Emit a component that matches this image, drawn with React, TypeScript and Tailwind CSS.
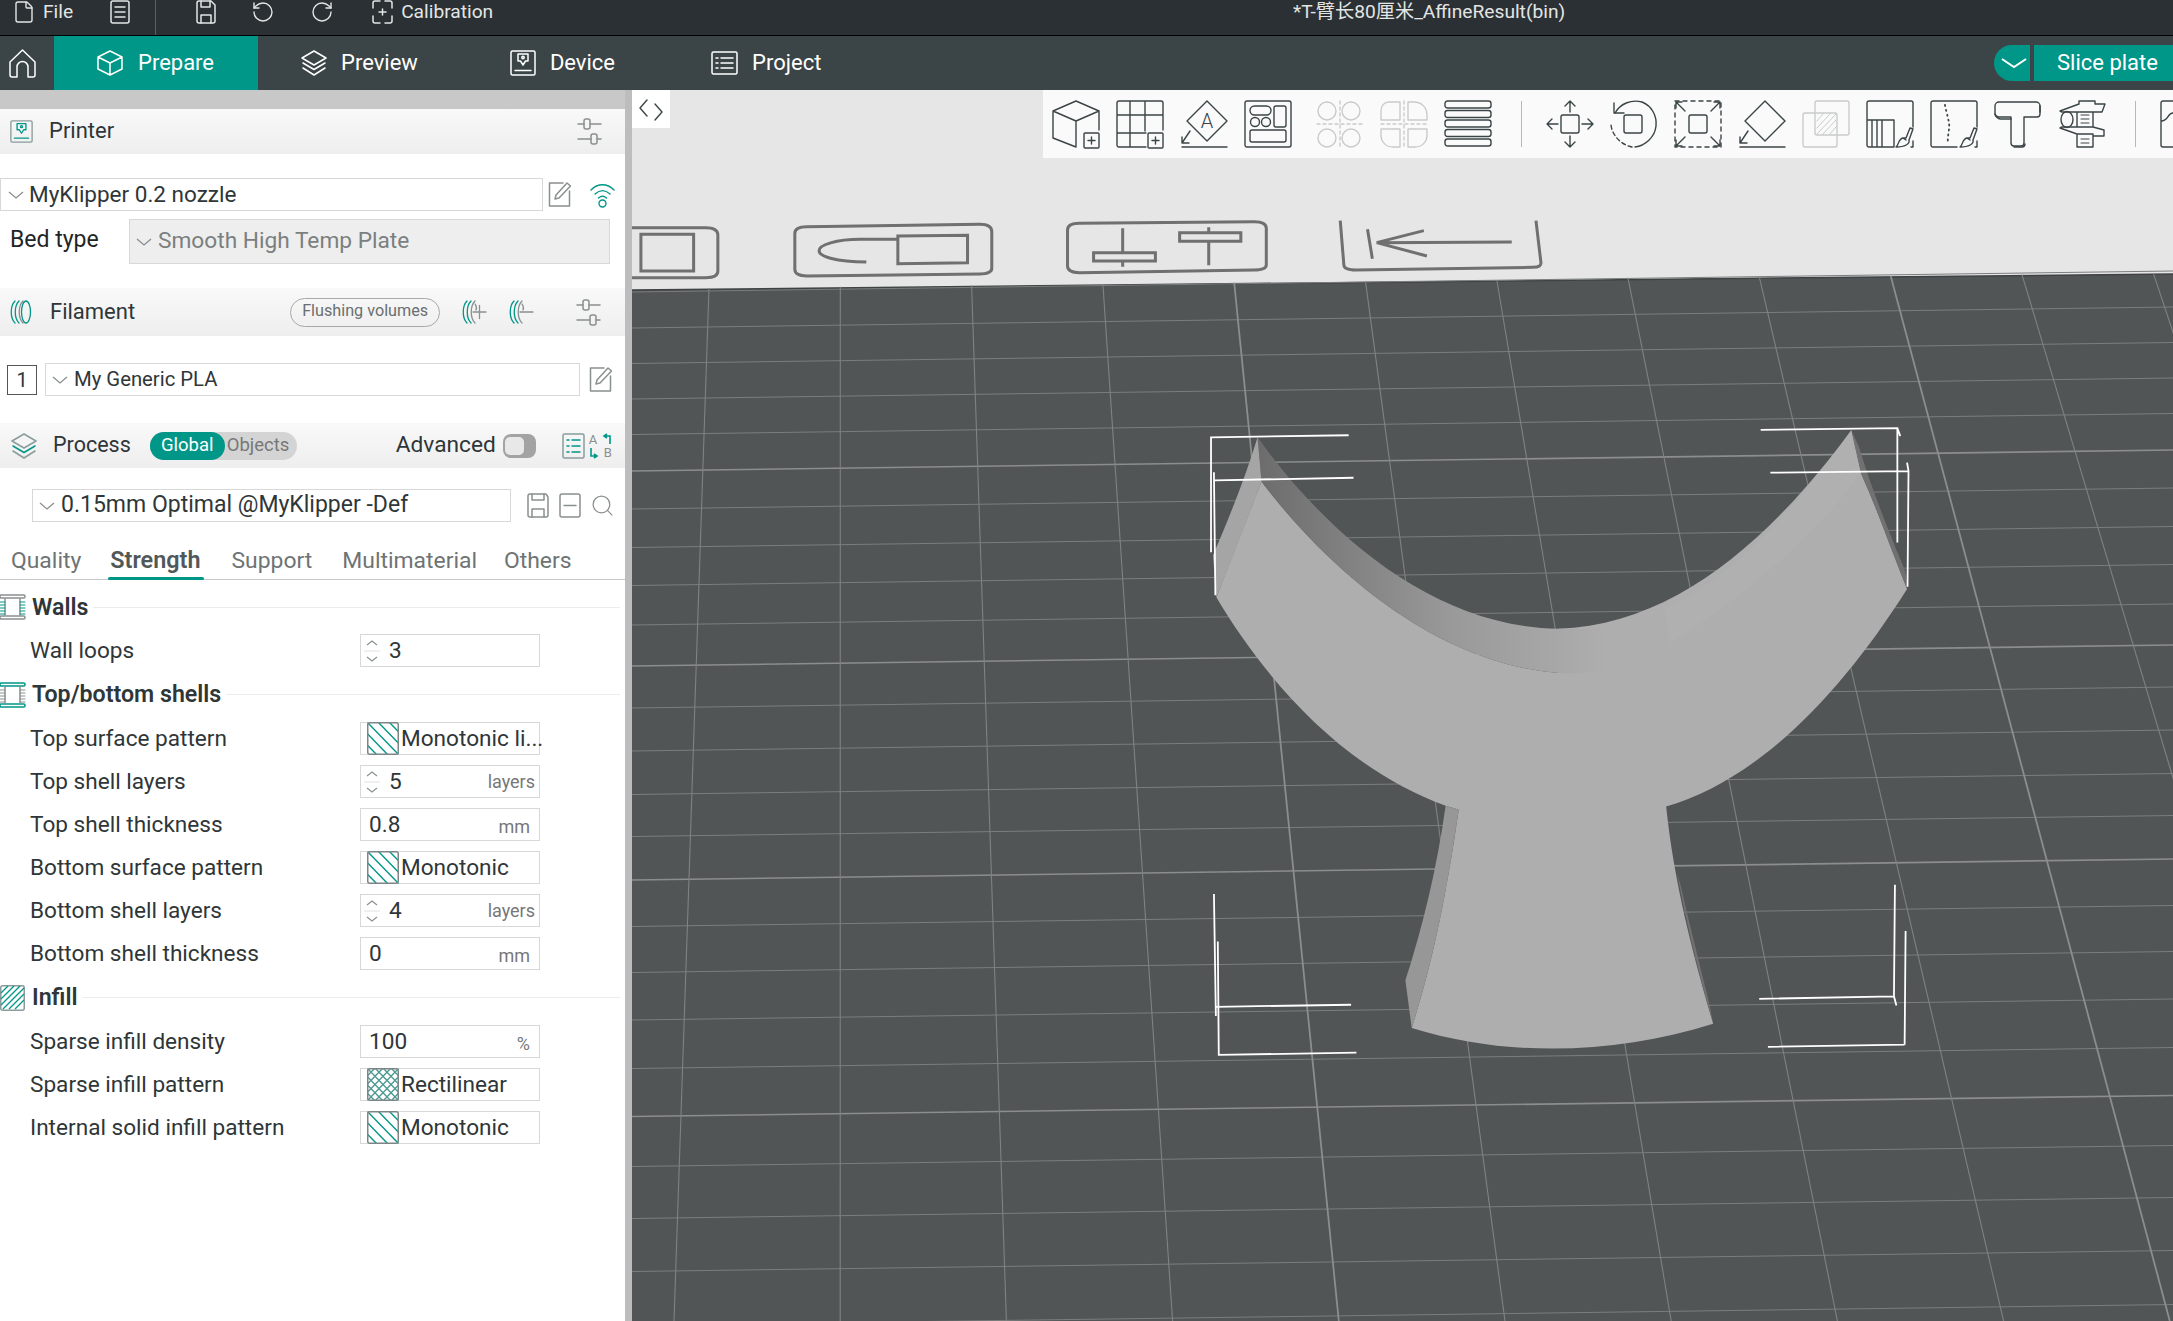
import { File, RotateCcw, RotateCw, Search } from "lucide-react";
import type { ReactNode } from "react";

const TEAL = "#009688";
const INK = "#3b4446";

function Glyph({ w, h, box, children, color = INK, sw = 1.5 }: { w: number; h: number; box?: string; children: ReactNode; color?: string; sw?: number }) {
  return (
    <svg width={w} height={h} viewBox={box ?? `0 0 ${w} ${h}`} fill="none" stroke={color} strokeWidth={sw} className="shrink-0 overflow-visible" strokeLinecap="round" strokeLinejoin="round">
      {children}
    </svg>
  );
}

// small glyphs used across the side panel and the top bars
const Chevron = ({ color = "#8a8f90" }: { color?: string }) => (
  <svg width="16" height="8" viewBox="0 0 16 8" fill="none" stroke={color} strokeWidth="1.3" className="shrink-0"><path d="M1 1l7 6 7-6" /></svg>
);
const Sliders = () => (
  <Glyph w={23} h={27} color="#8a8f90">
    <path d="M0 6h6M12 6h11M0 21h13M19 21h4" />
    <rect x="6" y="1" width="6" height="10" rx="2" />
    <rect x="13" y="16" width="6" height="10" rx="2" />
  </Glyph>
);
const Edit = () => (
  <Glyph w={23} h={25} color="#8a8f90">
    <path d="M15 1H1.5v23h20V9" />
    <path d="M7 17l1-4L19 1l3.5 3L11 16z" />
  </Glyph>
);
const PrinterIcon = ({ color = "#fff", accent = "#fff", s = 26 }: { color?: string; accent?: string; s?: number }) => (
  <Glyph w={s} h={s} box="0 0 26 26" color={color}>
    <rect x="1" y="1" width="24" height="24" rx="1.5" />
    <path d="M8 4h10v7h-2.5L13 15l-2.5-4H8z" stroke={accent} />
    <circle cx="13" cy="7.5" r="1.2" stroke={accent} />
    <path d="M5 20.5h16" stroke={accent} />
  </Glyph>
);
const LayersIcon = ({ color = "#fff", accent }: { color?: string; accent?: string }) => (
  <Glyph w={26} h={26} color={color}>
    <path d="M13 1l12 7-12 7L1 8z" />
    <path d="M2 13l11 6.5L24 13" stroke={accent ?? color} />
    <path d="M2 18l11 7 11-7" />
  </Glyph>
);
const FilamentIcon = ({ extra }: { extra?: ReactNode }) => (
  <Glyph w={24} h={24} color={TEAL} sw={1.3}>
    <path d="M5 1C0 6 0 18 5 23M9 1C4 6 4 18 9 23" />
    <path d="M13 1C8 6 8 18 13 23" stroke="#8a8f90" />
    {extra ?? <ellipse cx="16" cy="12" rx="4.500" ry="11" stroke={TEAL} />}
  </Glyph>
);

// shading patterns in the combo boxes
function Hatch({ kind }: { kind: "mono" | "rect" }) {
  const down = kind === "mono"
    ? [-22, -11, 0, 11, 22].map((d) => `M${d} 0L${d + 32} 33`)
    : [-24, -16, -8, 0, 8, 16, 24].map((d) => `M${d} 0L${d + 32} 33`);
  const up = [8, 16, 24, 32, 40, 48, 56].map((d) => `M${d} 0L${d - 32} 33`);
  return (
    <svg width="32" height="33" viewBox="0 0 32 33" className="shrink-0">
      <defs>
        <clipPath id={`hatch-${kind}`}><rect x="0" y="0" width="32" height="33" rx="2" /></clipPath>
      </defs>
      <g clipPath={`url(#hatch-${kind})`} fill="none" strokeWidth="1.4" stroke={kind === "mono" ? TEAL : "#4f9a92"}>
        <path d={down.join("")} />
        {kind === "rect" && <path d={up.join("")} />}
      </g>
      <rect x="0.75" y="0.75" width="30.5" height="31.5" rx="2" fill="none" stroke="#7d8687" strokeWidth="1.5" />
    </svg>
  );
}

function WallsIcon({ filled }: { filled?: boolean }) {
  return (
    <Glyph w={25} h={26} color={filled ? "#8a8f90" : TEAL}>
      <rect x="0" y="1" width="25" height="3" rx="1.2" />
      <rect x="0" y="22" width="25" height="3" rx="1.2" />
      <path d="M5 5v16M20 5v16" stroke="#8a8f90" />
      <path d="M0 8h5M0 11h5M0 14h5M0 17h5M0 20h5M20 8h5M20 11h5M20 14h5M20 17h5M20 20h5" stroke={filled ? TEAL : "#8a8f90"} strokeWidth="1" />
    </Glyph>
  );
}

function InfillIcon() {
  return (
    <svg width="25" height="26" viewBox="0 0 25 26" className="shrink-0" fill="none">
      <rect x="0.75" y="0.75" width="23.5" height="24.5" rx="2" stroke="#8a9c9c" strokeWidth="1.5" />
      <path d="M1 8L8 1M1 14L14 1M1 20L20 1M3 24L24 3M9 24L24 9M15 24L24 15" stroke={TEAL} strokeWidth="1.3" />
    </svg>
  );
}

function Row({ label, children }: { label: string; children: ReactNode }) {
  return (
    <div className="mb-[10px] flex h-[33px] items-center pl-[30px]">
      <div className="w-[330px] whitespace-nowrap text-[22.6px] text-[#2f3638]">{label}</div>
      <div className="flex h-[33px] w-[180px] items-center border border-[#d8d8d8] bg-white">{children}</div>
    </div>
  );
}

function NumberField({ value, unit, spin }: { value: string; unit?: string; spin?: boolean }) {
  return (
    <>
      {spin ? (
        <svg width="18" height="26" viewBox="0 0 18 26" fill="none" stroke="#8a8f90" strokeWidth="1.2" className="ml-[2px] mr-[8px] shrink-0">
          <path d="M4 7l5-4 5 4M4 19l5 4 5-4" />
          <path d="M1 13h16" stroke="#e6e6e6" />
        </svg>
      ) : (
        <span className="w-[8px]" />
      )}
      <span className="text-[22.6px] text-[#2f3638]">{value}</span>
      {unit && <span className={`ml-auto text-[18px] text-[#777] ${unit === "layers" ? "mr-[4px]" : "mr-[9px] mt-[3px]"}`}>{unit}</span>}
    </>
  );
}

function PatternField({ kind = "mono", text }: { kind?: "mono" | "rect"; text: string }) {
  return (
    <>
      <span className="ml-[6px] mr-[2px] flex"><Hatch kind={kind} /></span>
      <span className="whitespace-nowrap text-[22.6px] text-[#2f3638]">{text}</span>
    </>
  );
}

function Section({ title, icon, className = "h-[55px]" }: { title: string; icon: ReactNode; className?: string }) {
  return (
    <div className={`flex items-center pr-[5px] ${className}`}>
      {icon}
      <span className="ml-[7px] whitespace-nowrap text-[23.2px] font-semibold text-[#2f3638]">{title}</span>
      <span className="ml-[5px] h-px flex-1 bg-[#ececec]" />
    </div>
  );
}

function PanelHeader({ className, children }: { className: string; children: ReactNode }) {
  return <div className={`flex items-center bg-gradient-to-b from-[#f9f9f9] to-[#eeeeee] ${className}`}>{children}</div>;
}

function SidePanel() {
  return (
    <div className="flex w-[625px] shrink-0 flex-col bg-white text-[#2f3638]">
      <div className="h-[19px] bg-[#c8c8c8]" />
      <PanelHeader className="h-[45px] pl-[10px] pr-[24px]">
        <PrinterIcon color="#8a9c9c" accent={TEAL} s={23} />
        <span className="ml-[16px] pb-[2px] text-[22px]">Printer</span>
        <span className="ml-auto flex"><Sliders /></span>
      </PanelHeader>
      <div className="mt-[24px] flex h-[33px] items-center">
        <div className="flex h-[33px] w-[543px] items-center border border-[#d8d8d8] pl-[7px]">
          <Chevron />
          <span className="ml-[5px] text-[22.5px]">MyKlipper 0.2 nozzle</span>
        </div>
        <span className="ml-[5px] flex"><Edit /></span>
        <span className="ml-[19px] flex">
          <Glyph w={25} h={26} color={TEAL} sw={1.4}>
            <path d="M1 8C8 1 17 1 24 8M5 12c5-4.5 10-4.500 15 0M8.500 16c3-2.500 5-2.500 8 0" />
            <circle cx="12.500" cy="21.500" r="3.500" />
          </Glyph>
        </span>
      </div>
      <div className="mt-[8px] flex h-[45px] items-center">
        <span className="ml-[10px] w-[119px] pb-[2px] text-[23px] text-[#1f2526]">Bed type</span>
        <div className="flex h-[45px] w-[481px] items-center border border-[#d8d8d8] bg-[#eeeeee] pl-[6px] text-[22.7px] text-[#7b7f80]">
          <Chevron />
          <span className="ml-[6px]">Smooth High Temp Plate</span>
        </div>
      </div>
      <PanelHeader className="mt-[24px] h-[48px] pl-[10px] pr-[25px]">
        <FilamentIcon />
        <span className="ml-[16px] pb-[2px] text-[22px]">Filament</span>
        <span className="ml-[155px] flex h-[29px] w-[150px] items-center justify-center rounded-full border border-[#a8a8a8] pb-px text-[16.2px] text-[#6a6f70]">Flushing volumes</span>
        <span className="ml-[22px] flex">
          <FilamentIcon extra={<path d="M11 12h13M17.500 5.500v13M13 4c2 3 2 4 1 6" stroke="#8a8f90" />} />
        </span>
        <span className="ml-[23px] flex">
          <FilamentIcon extra={<path d="M11 12h13M13 4c2 3 2 4 1 6" stroke="#8a8f90" />} />
        </span>
        <span className="ml-auto flex"><Sliders /></span>
      </PanelHeader>
      <div className="mt-[27px] flex h-[33px] items-center">
        <span className="ml-[7px] flex h-[30px] w-[30px] items-center justify-center border border-[#555] text-[20px]">1</span>
        <div className="ml-[8px] flex h-[33px] w-[535px] items-center border border-[#d8d8d8] pl-[6px]">
          <Chevron />
          <span className="ml-[6px] text-[20.3px]">My Generic PLA</span>
        </div>
        <span className="ml-[9px] flex"><Edit /></span>
      </div>
      <PanelHeader className="mt-[27px] h-[45px] pl-[11px] pr-[13px]">
        <LayersIcon color="#8a9c9c" accent={TEAL} />
        <span className="ml-[16px] pb-[1px] text-[21.5px]">Process</span>
        <div className="ml-[19px] flex h-[28px] w-[147px] items-center rounded-full bg-[#d4d4d4] text-[18.5px]">
          <span className="flex h-[28px] w-[75px] items-center justify-center rounded-full bg-[#009688] text-white">Global</span>
          <span className="ml-[2px] text-[#777]">Objects</span>
        </div>
        <span className="ml-[99px] pb-[1px] text-[22.7px]">Advanced</span>
        <span className="ml-[7px] flex h-[24px] w-[33px] items-center rounded-[8px] bg-[#a3a3a3] pl-[2px]">
          <span className="h-[18px] w-[19px] rounded-[5px] bg-[#e8e8e8]" />
        </span>
        <span className="ml-[26px] flex">
          <Glyph w={23} h={26} color="#8a9c9c">
            <rect x="1" y="1" width="21" height="24" rx="1.5" />
            <path d="M5 7h2M10 7h8M5 13h2M10 13h8M5 19h2M10 19h8" stroke={TEAL} />
          </Glyph>
        </span>
        <span className="relative ml-[4px] h-[26px] w-[23px] text-[13px] leading-none text-[#8a8f90]">
          <span className="absolute left-0 top-0">A</span>
          <span className="absolute bottom-0 right-0">B</span>
          <svg width="23" height="26" viewBox="0 0 23 26" fill="none" stroke={TEAL} strokeWidth="1.600" className="absolute inset-0">
            <path d="M21 11V3h-6M18 1l-3 2 3 2M2 15v8h6M5 21l3 2-3 2" />
          </svg>
        </span>
      </PanelHeader>
      <div className="mt-[21px] flex h-[33px] items-center">
        <div className="ml-[32px] flex h-[33px] w-[479px] items-center border border-[#d8d8d8] pl-[6px]">
          <Chevron />
          <span className="ml-[6px] whitespace-nowrap text-[23px]">0.15mm Optimal @MyKlipper -Def</span>
        </div>
        <span className="ml-[16px] flex">
          <Glyph w={22} h={25} color="#8a8f90">
            <path d="M1 3a2 2 0 0 1 2-2h16l2 3v18a2 2 0 0 1-2 2H3a2 2 0 0 1-2-2z" />
            <path d="M5 1v6h12V1M5 24v-8h12v8" />
          </Glyph>
        </span>
        <span className="ml-[10px] flex">
          <Glyph w={22} h={25} color="#8a8f90">
            <rect x="1" y="1" width="20" height="23" rx="2" />
            <path d="M5 12.500h12" />
          </Glyph>
        </span>
        <span className="ml-[9px] flex"><Search size={25} strokeWidth={1.2} color="#8a8f90" /></span>
      </div>
      <div className="relative flex h-[58px] items-end border-b border-[#c8c8c8] pb-[1px] text-[22.9px] text-[#6e7374]">
        <span className="ml-[11px]">Quality</span>
        <span className="relative ml-[29px] text-[23.4px] font-semibold text-[#50585a]">
          Strength
          <span className="absolute -bottom-[2px] -left-[2px] -right-[3px] h-[3px] rounded-full bg-[#009688]" />
        </span>
        <span className="ml-[31px]">Support</span>
        <span className="ml-[30px]">Multimaterial</span>
        <span className="ml-[27px]">Others</span>
      </div>
      <Section title="Walls" icon={<WallsIcon filled />} className="h-[54px]" />
      <Row label="Wall loops"><NumberField value="3" spin /></Row>
      <div className="-mt-[10px]"><Section title="Top/bottom shells" icon={<WallsIcon />} /></div>
      <Row label="Top surface pattern"><PatternField text="Monotonic li..." /></Row>
      <Row label="Top shell layers"><NumberField value="5" unit="layers" spin /></Row>
      <Row label="Top shell thickness"><NumberField value="0.8" unit="mm" /></Row>
      <Row label="Bottom surface pattern"><PatternField text="Monotonic" /></Row>
      <Row label="Bottom shell layers"><NumberField value="4" unit="layers" spin /></Row>
      <Row label="Bottom shell thickness"><NumberField value="0" unit="mm" /></Row>
      <div className="-mt-[10px]"><Section title="Infill" icon={<InfillIcon />} /></div>
      <Row label="Sparse infill density"><NumberField value="100" unit="%" /></Row>
      <Row label="Sparse infill pattern"><PatternField kind="rect" text="Rectilinear" /></Row>
      <Row label="Internal solid infill pattern"><PatternField text="Monotonic" /></Row>
    </div>
  );
}

function TitleBar() {
  return (
    <div className="relative flex h-[36px] shrink-0 items-start border-b border-black bg-[#2a3033] text-[19.2px] text-[#e3e5e5]">
      <div className="flex h-[24px] items-center">
        <File size={24} strokeWidth={1.4} className="ml-[12px]" />
        <span className="ml-[7px]">File</span>
        <span className="ml-[37px] flex">
          <Glyph w={20} h={24} color="#e3e5e5">
            <rect x="1" y="1" width="18" height="22" rx="2" />
            <path d="M5 7h10M5 12h10M5 17h10" />
          </Glyph>
        </span>
        <span className="ml-[25px] h-[35px] w-px self-start bg-[#5a6163]" />
        <span className="ml-[40px] flex">
          <Glyph w={20} h={24} color="#e3e5e5">
            <path d="M1 3a2 2 0 0 1 2-2h12l4 4v16a2 2 0 0 1-2 2H3a2 2 0 0 1-2-2z" />
            <path d="M5 1v6h9V1M5 23v-8h10v8" />
          </Glyph>
        </span>
        <RotateCcw size={24} strokeWidth={1.4} className="ml-[35px]" />
        <RotateCw size={24} strokeWidth={1.4} className="ml-[35px]" />
        <span className="ml-[38px] flex">
          <Glyph w={21} h={24} color="#e3e5e5">
            <path d="M8 1H3a2 2 0 0 0-2 2v5M13 1h5a2 2 0 0 1 2 2v5M8 23H3a2 2 0 0 1-2-2v-5M13 23h5a2 2 0 0 0 2-2v-5M7 12h7M10.500 9v6" />
          </Glyph>
        </span>
        <span className="ml-[8px]">Calibration</span>
      </div>
      <span className="absolute left-[1293px] top-0 flex h-[24px] items-center whitespace-nowrap">*T-臂长80厘米_AffineResult(bin)</span>
    </div>
  );
}

function TabBar() {
  return (
    <div className="flex h-[54px] shrink-0 items-center bg-[#3b4446] text-[22px] text-white">
      <span className="ml-[9px] flex">
        <Glyph w={27} h={29} color="#fff">
          <path d="M1 13L13.500 1 26 13v13a2 2 0 0 1-2 2h-5V18a5.500 5.500 0 0 0-11 0v10H3a2 2 0 0 1-2-2z" />
        </Glyph>
      </span>
      <div className="ml-[18px] flex h-[54px] w-[204px] items-center bg-[#009688] pl-[43px]">
        <Glyph w={26} h={26} color="#fff">
          <path d="M13 1l12 6v12l-12 6-12-6V7zM1 7l12 6 12-6M13 13v12" />
        </Glyph>
        <span className="ml-[15px] pb-[2px]">Prepare</span>
      </div>
      <span className="ml-[43px] flex"><LayersIcon /></span>
      <span className="ml-[14px] pb-[2px]">Preview</span>
      <span className="ml-[92px] flex"><PrinterIcon /></span>
      <span className="ml-[14px] pb-[2px]">Device</span>
      <span className="ml-[96px] flex">
        <Glyph w={27} h={24} color="#fff">
          <rect x="1" y="1" width="25" height="22" rx="1.5" />
          <path d="M5 7h2M10 7h12M5 12h2M10 12h12M5 17h2M10 17h12" />
        </Glyph>
      </span>
      <span className="ml-[14px] pb-[2px]">Project</span>
      <div className="ml-auto flex h-[36px] items-center">
        <span className="flex h-[36px] w-[36px] items-center justify-center rounded-l-full bg-[#009688] pl-[4px]">
          <svg width="26" height="11" viewBox="0 0 26 11" fill="none" stroke="#fff" strokeWidth="2"><path d="M1 1l12 8 12-8" /></svg>
        </span>
        <span className="ml-[4px] flex h-[36px] w-[139px] items-center bg-[#009688] pb-[2px] pl-[23px]">Slice plate</span>
      </div>
    </div>
  );
}

// top toolbar over the 3D view, every tool drawn on a 46 box
const DIS = "#c9cbcb";
function Tool({ children, color = INK }: { children: ReactNode; color?: string }) {
  return <Glyph w={46} h={46} color={color} sw={1.4}>{children}</Glyph>;
}
const Plus = ({ x, y, s = 15 }: { x: number; y: number; s?: number }) => (
  <>
    <rect x={x} y={y} width={s} height={s} rx="1" />
    <path d={`M${x + 4} ${y + s / 2}h${s - 8}M${x + s / 2} ${y + 4}v${s - 8}`} />
  </>
);
const BRUSH = "M43 27l3 1-4 11c1 4-4 7-13 7 3-2 2-8 7-9h3zM36 37l3 2";

function Toolbar() {
  return (
    <div className="absolute left-[411px] right-0 top-0 flex h-[68px] items-center gap-[18px] overflow-hidden bg-[#fafafa] pl-[10px]">
      <Tool>
        <path d="M23 0L46 10 23 20 0 10zM0 10v27l23 9M23 20v26M46 10v19" />
        <Plus x={31} y={32} />
      </Tool>
      <Tool>
        <path d="M29 46H2a2 2 0 0 1-2-2V2a2 2 0 0 1 2-2h42a2 2 0 0 1 2 2v27M0 14h46M0 32h29M13 0v46M28 0v30" />
        <Plus x={31} y={32} />
      </Tool>
      <Tool>
        <path d="M26 0l20 20-20 20L6 20zM1 46h45M9 30L1 42M1 36v6h7" />
        <text x="26" y="27" textAnchor="middle" fontSize="20" fontFamily="Roboto" fontWeight="300" fill={INK} stroke="none">A</text>
      </Tool>
      <Tool>
        <rect x="0" y="0" width="46" height="46" rx="2" />
        <rect x="5" y="5" width="21" height="9" rx="4.500" />
        <rect x="29" y="5" width="12" height="21" rx="2" />
        <circle cx="10" cy="21" r="4.500" />
        <circle cx="21" cy="21" r="4.500" />
        <rect x="5" y="29" width="36" height="12" rx="2" />
      </Tool>
      <div className="ml-[8px] flex">
        <Tool color={DIS}>
          <circle cx="10" cy="10" r="9" /><circle cx="34" cy="10" r="9" /><circle cx="10" cy="37" r="9" /><circle cx="34" cy="37" r="9" />
          <path d="M0 23h46M23 0v46" strokeDasharray="3 3" />
        </Tool>
      </div>
      <Tool color={DIS}>
        <path d="M19 1H8C3 1 0 5 0 10v9h19zM27 1h6c8 0 13 6 13 13v5H27zM19 28H0v6c0 7 5 12 12 12h7zM27 28h19v6c0 7-5 12-12 12h-7z" />
        <path d="M0 23h46M23 0v46" strokeDasharray="3 3" />
      </Tool>
      <Tool>
        {[0, 9.500, 19, 28.500, 38].map((y) => <rect key={y} x="0" y={y} width="46" height="7" rx="2.500" />)}
      </Tool>
      <span className="ml-[12px] mr-[7px] h-[46px] w-px shrink-0 bg-[#b4b8b8]" />
      <Tool>
        <rect x="14" y="14" width="18" height="18" rx="2" />
        <path d="M23 1v10M18 5l5-5 5 5M23 35v10M18 41l5 5 5-5M1 23h10M5 18l-5 5 5 5M35 23h10M41 18l5 5-5 5" />
      </Tool>
      <Tool>
        <rect x="13" y="14" width="18" height="18" rx="2" />
        <path d="M4 12C9 3 20-2 31 1c10 4 15 14 14 24-1 11-11 20-21 21" />
        <path d="M21 46C10 44 1 34 0 24" strokeDasharray="4 3" />
        <path d="M3 2v10h10" />
      </Tool>
      <Tool>
        <rect x="14" y="14" width="18" height="18" rx="2" />
        <path d="M0 0h46v46H0z" strokeDasharray="4 4" />
        <path d="M1 1l9 9M1 7V1h6M45 1l-9 9M39 1h6v6M1 45l9-9M1 39v6h6M45 45l-9-9M39 45h6v-6" />
      </Tool>
      <Tool>
        <path d="M26 0l20 20-20 20L6 20zM1 46h45M9 30L1 42M1 36v6h7" />
      </Tool>
      <Tool color={DIS}>
        <rect x="12" y="0" width="34" height="34" rx="2" />
        <rect x="0" y="12" width="34" height="34" rx="2" />
        <path d="M14 20l6-7M14 27l13-14M14 33l19-20M20 33l13-14M27 33l6-7" strokeWidth="1" />
      </Tool>
      <Tool>
        <path d="M26 46H2a2 2 0 0 1-2-2V2a2 2 0 0 1 2-2h42a2 2 0 0 1 2 2v24M46 40v6h-2M0 19h27v27M5 19v27M10 19v27M15 19v27" />
        <path d={BRUSH} />
      </Tool>
      <Tool>
        <path d="M26 46H2a2 2 0 0 1-2-2V2a2 2 0 0 1 2-2h42a2 2 0 0 1 2 2v24M46 40v6h-2" />
        <path d="M14 4c1 6 3 12 4 18s-2 14-1 21" strokeDasharray="1 4" strokeWidth="1.800" />
        <path d={BRUSH} />
      </Tool>
      <Tool>
        <path d="M0 5a4 4 0 0 1 4-4h37a4 4 0 0 1 4 4v8a3 3 0 0 1-3 3H29v26a3 3 0 0 1-3 3h-7a3 3 0 0 1-3-3V16H4a4 4 0 0 1-4-3z" />
        <path d="M0 13c0 3 4 5 6 5h10M19 46h8c3 0 3-3 3-3M45 5v6" />
      </Tool>
      <Tool>
        <path d="M1 10L20 3V0h16v3h10l-3 8H3zM1 27l17 6h16v2h11v-6l-11-3H3zM18 33v13h16V35M18 11v15M34 11v15" />
        <ellipse cx="8" cy="18.500" rx="6" ry="8" />
        <path d="M22 14h8M22 18h8M22 22h8M22 38h8M22 42h8" strokeWidth="1" />
      </Tool>
      <span className="ml-[12px] mr-[7px] h-[46px] w-px shrink-0 bg-[#b4b8b8]" />
      <Tool>
        <path d="M46 0H2a2 2 0 0 0-2 2v42a2 2 0 0 0 2 2h44M0 20c8 0 6-8 12-8s6 8 12 8" />
      </Tool>
    </div>
  );
}

// perspective fan of the build plate
const verticals = Array.from({ length: 13 }, (_, i) => i);
const horizontals = [292, 328, 363.5, 399, 434.5, 471, 509, 547.5, 585.5, 625, 666, 708, 751, 794.5, 836.5, 880, 926.5, 972.5, 1020, 1068.5, 1116.5, 1166.5, 1218.5, 1271.5, 1325.5];

const OUTLINE = [
  "M64,338 L64,65 L348,60",
  "M70,148 L73,440 M72,167 L358,161",
  "M1198,47 L1480,43 L1480,315 M1480,43 L1486,62",
  "M1218,149 L1503,145 M1500,125 L1503,145 L1501,420",
  "M70,1150 L74,1440 M74,1418 L353,1413",
  "M78,1263 L80,1532 L364,1527",
  "M1475,1128 L1473,1393 L1478,1415 M1195,1399 L1473,1393",
  "M1497,1238 L1495,1508 M1213,1513 L1495,1508",
];

function Scene() {
  return (
    <svg className="absolute inset-0 h-full w-full" viewBox="632 90 1541 1231" preserveAspectRatio="none">
      <defs>
        <linearGradient id="wall" gradientUnits="userSpaceOnUse" x1="160" y1="0" x2="880" y2="0">
          <stop offset="0" stopColor="#6c6c6c" />
          <stop offset="0.55" stopColor="#999999" />
          <stop offset="1" stopColor="#aeaeae" />
        </linearGradient>
        <filter id="soft"><feGaussianBlur stdDeviation="0.6" /></filter>
      </defs>
      <rect x="632" y="90" width="1541" height="1231" fill="#e6e6e6" />
      <polygon points="632,290 2173,274 2173,1321 632,1321" fill="#515556" />
      <path d="M632 290L2173 274" stroke="#3f4344" strokeWidth="1.5" />
      {horizontals.map((y, i) => (
        <path key={y} d={`M632 ${y}L2173 ${y - 21}`} stroke={i % 5 === 0 && i > 0 ? "#8b8e8c" : "#7a7e7d"} strokeWidth={i % 5 === 0 && i > 0 ? 1.6 : 1} />
      ))}
      {verticals.map((i) => {
        const t = 709 + 131.3 * i;
        const b = 674 + 166.2 * i;
        return <path key={i} d={`M${t} ${289 - (t - 632) * 0.0104}L${b} 1321`} stroke={i === 4 || i === 9 ? "#8b8e8c" : "#7f8382"} strokeWidth={i === 4 || i === 9 ? 1.8 : 1.1} />;
      })}

      {/* embossed labels along the back of the plate */}
      <g transform="translate(630 190) scale(0.606 0.3333)" fill="none" stroke="#6f6f6f" strokeWidth="3" filter="url(#soft)">
        <path vectorEffect="non-scaling-stroke" d="M0 113H125Q145 113 145 135V243Q145 263 125 263H0" />
        <path vectorEffect="non-scaling-stroke" d="M18 133H105V243H18z" />
        <path vectorEffect="non-scaling-stroke" d="M292 110L577 103Q597 103 597 125V235Q597 252 577 252L292 258Q272 258 272 238V130Q272 110 292 110z" />
        <path vectorEffect="non-scaling-stroke" d="M442 148H380C340 148 312 165 312 182C312 200 340 215 390 216M442 138L557 136V218L442 221z" />
        <path vectorEffect="non-scaling-stroke" d="M742 100L1030 95Q1050 95 1050 115V225Q1050 240 1030 240L742 248Q722 248 722 228V120Q722 100 742 100z" />
        <path vectorEffect="non-scaling-stroke" d="M813 115V185M813 215V230M765 188H867V213H765zM955 112V128M955 155V226M907 128H1008V154H907z" />
        <path vectorEffect="non-scaling-stroke" d="M1172 92L1178 225Q1178 240 1198 240L1490 232Q1505 232 1503 215L1495 92" />
        <path vectorEffect="non-scaling-stroke" d="M1217 118L1225 206M1232 158L1455 156M1232 158L1310 122M1232 158L1315 198" />
      </g>

      {/* model, drawn in the coordinates of the crop it was measured on */}
      <g transform="translate(1180 410) scale(0.4847 0.4209)">
        <path d="M75,445 C170,630 330,850 548,940 L575,950 C550,1150 520,1320 478,1468 C680,1540 900,1530 1100,1458 C1060,1300 1020,1130 1003,942 C1190,880 1360,680 1500,425 C1470,340 1440,240 1405,150 L1385,48 C1230,290 1030,510 780,520 L780,625 C520,600 300,370 168,170 Z" fill="#aeaeae" />
        <path d="M1385,48 L1405,150 C1330,265 1250,350 1180,415 C1120,470 1060,520 1010,555 L1000,470 C1150,400 1290,200 1385,48 Z" fill="#b0b0b0" />
        <path d="M160,65 C300,290 520,515 780,520 C820,520 860,518 880,515 L875,618 C840,625 810,627 780,625 C520,600 300,370 168,170 Z" fill="url(#wall)" />
        <path d="M160,65 L168,170 C135,270 105,360 75,445 L68,345 C100,260 135,160 160,65 Z" fill="#a5a5a5" />
        <path d="M548,940 L575,950 C550,1150 520,1320 478,1468 L465,1355 C500,1230 530,1090 548,940 Z" fill="#979797" />
        <path d="M1385,48 L1400,85 C1430,200 1470,310 1497,385 L1500,425 C1470,340 1440,240 1405,150 Z" fill="#717171" />
        <path d="M1025,1100 L1032,1125 C1055,1240 1075,1330 1092,1410 L1100,1458 C1070,1340 1045,1220 1025,1100 Z" fill="#717171" />
        {OUTLINE.map((d) => (
          <path key={d} d={d} fill="none" stroke="#fff" strokeWidth="1.800" vectorEffect="non-scaling-stroke" />
        ))}
      </g>
    </svg>
  );
}

function Viewport() {
  return (
    <div className="relative flex-1 overflow-hidden bg-[#e6e6e6]">
      <Scene />
      <div className="absolute left-0 top-0 flex h-[38px] w-[38px] items-center justify-center bg-white">
        <Glyph w={24} h={26} color={INK} sw={1.4}><path d="M8 4L1 12l7 8M16 8l7 8-7 8" /></Glyph>
      </div>
      <Toolbar />
    </div>
  );
}

export default function App() {
  return (
    <div className="flex h-[1321px] w-[2173px] flex-col overflow-hidden bg-white font-['Roboto','Noto_Sans_CJK_SC',sans-serif]">
      <TitleBar />
      <TabBar />
      <div className="flex flex-1 overflow-hidden">
        <SidePanel />
        <div className="w-[7px] shrink-0 bg-[#bdbdbd]" />
        <Viewport />
      </div>
    </div>
  );
}
